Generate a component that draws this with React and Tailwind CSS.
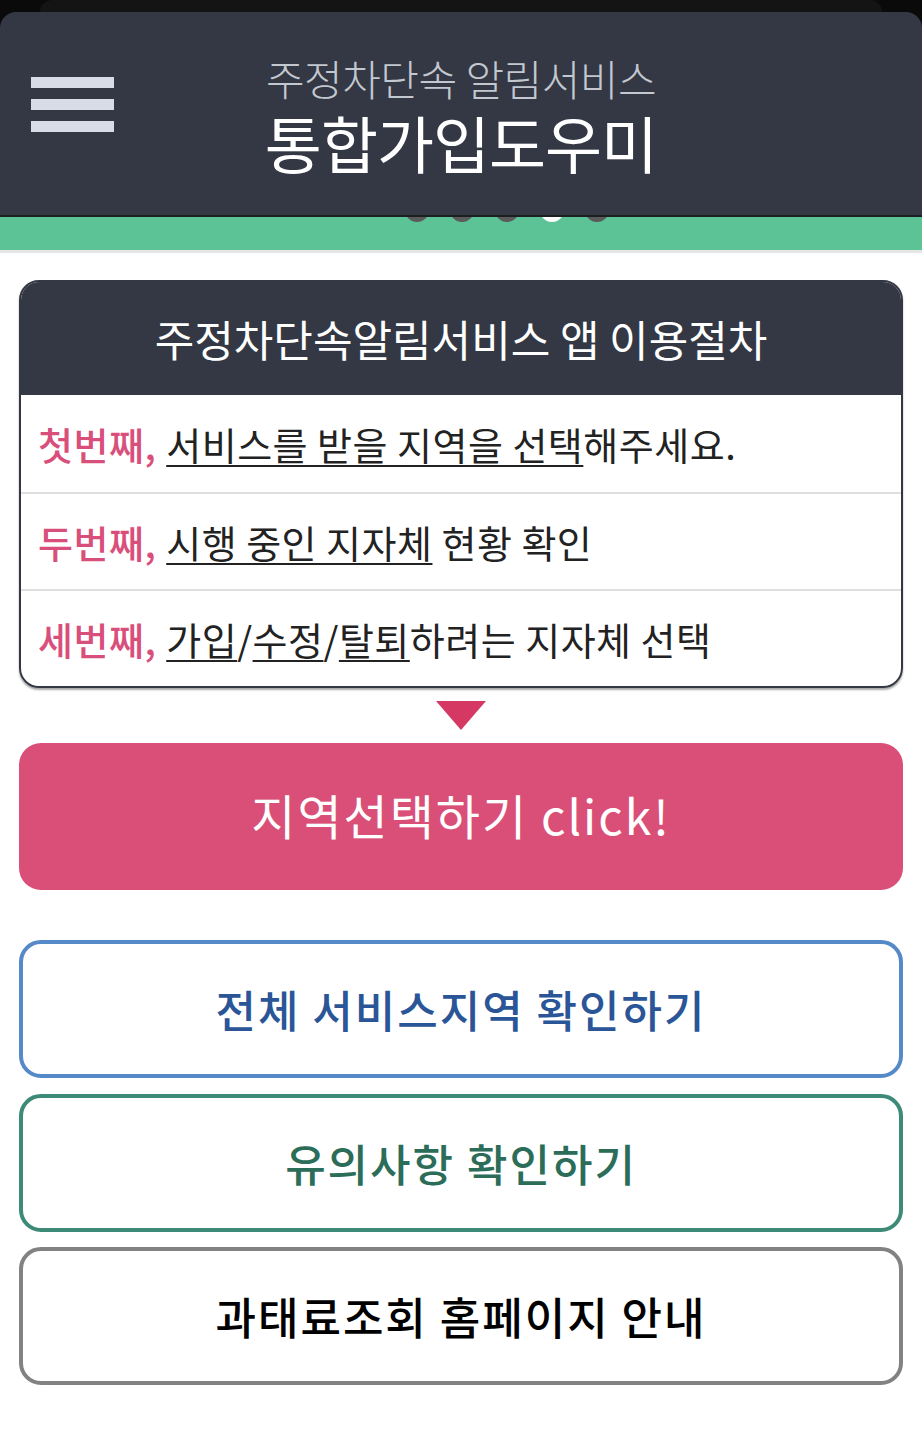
import React from "react";

const steps = [
  {
    label: "첫번째,",
    parts: [
      { t: "서비스를 받을 지역을 선택", u: true },
      { t: "해주세요." },
    ],
  },
  {
    label: "두번째,",
    parts: [
      { t: "시행 중인 지자체", u: true },
      { t: " 현황 확인" },
    ],
  },
  {
    label: "세번째,",
    parts: [
      { t: "가입", u: true },
      { t: "/" },
      { t: "수정", u: true },
      { t: "/" },
      { t: "탈퇴", u: true },
      { t: "하려는 지자체 선택" },
    ],
  },
];

const OutlineButton = ({ border, color, children, className = "" }) => (
  <button
    className={`w-full h-[138px] rounded-[22px] border-[4px] bg-white flex items-center justify-center text-[44px] font-medium tracking-[2px] ${border} ${color} ${className}`}
  >
    {children}
  </button>
);

const App = () => {
  return (
    <div className="w-[922px] min-h-[1437px] bg-white font-['Noto_Sans_CJK_KR','Noto_Sans',sans-serif]">
      {/* status area */}
      <div className="bg-[#0a0a0a]">
        <div className="h-3 mx-[40px] bg-[#141414] rounded-t-[40px]"></div>
        <header className="relative z-10 h-[205px] bg-[#333844] rounded-t-[16px] border-b-2 border-[#1c1e24] grid grid-cols-[1fr_auto_1fr] items-center">
          <div className="pl-[31px] -mt-[19px] flex flex-col gap-[11px]">
            <span className="block w-[83px] h-[11px] bg-[#d8dce6]"></span>
            <span className="block w-[83px] h-[11px] bg-[#d8dce6]"></span>
            <span className="block w-[83px] h-[11px] bg-[#d8dce6]"></span>
          </div>
          <div className="flex flex-col items-center mt-[2px]">
            <span className="text-[42px] leading-[44px] font-light text-[#c3c7cf] tracking-[-0.5px]">
              주정차단속 알림서비스
            </span>
            <span className="mt-[10px] text-[62px] leading-[64px] font-normal text-white tracking-[-1px]">
              통합가입도우미
            </span>
          </div>
          <div></div>
        </header>
      </div>

      {/* slider strip */}
      <div className="relative h-[33px] bg-[#5bc396]">
        <div className="absolute left-0 right-0 -top-[19px] pl-[92px] flex justify-center gap-[21px]">
          <span className="w-6 h-6 rounded-full bg-[#5a5a5a]"></span>
          <span className="w-6 h-6 rounded-full bg-[#5a5a5a]"></span>
          <span className="w-6 h-6 rounded-full bg-[#5a5a5a]"></span>
          <span className="w-6 h-6 rounded-full bg-white"></span>
          <span className="w-6 h-6 rounded-full bg-[#5a5a5a]"></span>
        </div>
      </div>
      <div className="h-[3px] bg-[#e6e6e6]"></div>

      <main className="px-[19px] pt-[27px] pb-[50px] flex flex-col items-center">
        {/* procedure card */}
        <section className="w-full rounded-[20px] border-2 border-[#333844] overflow-hidden shadow-[0_2px_2px_rgba(0,0,0,0.35)]">
          <div className="h-[113px] bg-[#333844] flex items-center justify-center">
            <h2 className="text-[43px] font-normal text-white tracking-[0px]">
              주정차단속알림서비스 앱 이용절차
            </h2>
          </div>
          {steps.map((s, i) => (
            <div
              key={i}
              className={`h-[97px] flex items-center pl-[17px] text-[38px] text-[#222] tracking-[0.5px] ${
                i > 0 ? "border-t-2 border-[#dedede]" : ""
              }`}
            >
              <span className="text-[#d94f7c] font-medium mr-[10px]">{s.label}</span>
              <span>
                {s.parts.map((p, j) => (
                  <span
                    key={j}
                    className={p.u ? "underline decoration-2 underline-offset-[5px]" : ""}
                  >
                    {p.t}
                  </span>
                ))}
              </span>
            </div>
          ))}
        </section>

        {/* arrow */}
        <div className="mt-[13px] w-0 h-0 border-l-[25px] border-r-[25px] border-t-[29px] border-l-transparent border-r-transparent border-t-[#d63864]"></div>

        <button className="mt-[13px] w-full h-[147px] rounded-[22px] bg-[#da4f78] text-white text-[48px] font-normal tracking-[2px] flex items-center justify-center pb-[5px]">
          지역선택하기 click!
        </button>

        <OutlineButton border="border-[#5589c8]" color="text-[#2a5597]" className="mt-[50px]">
          전체 서비스지역 확인하기
        </OutlineButton>
        <OutlineButton border="border-[#3d8a78]" color="text-[#2c6d5a]" className="mt-[16px]">
          유의사항 확인하기
        </OutlineButton>
        <OutlineButton border="border-[#828282]" color="text-black" className="mt-[15px]">
          과태료조회 홈페이지 안내
        </OutlineButton>
      </main>
    </div>
  );
};

export default App;
